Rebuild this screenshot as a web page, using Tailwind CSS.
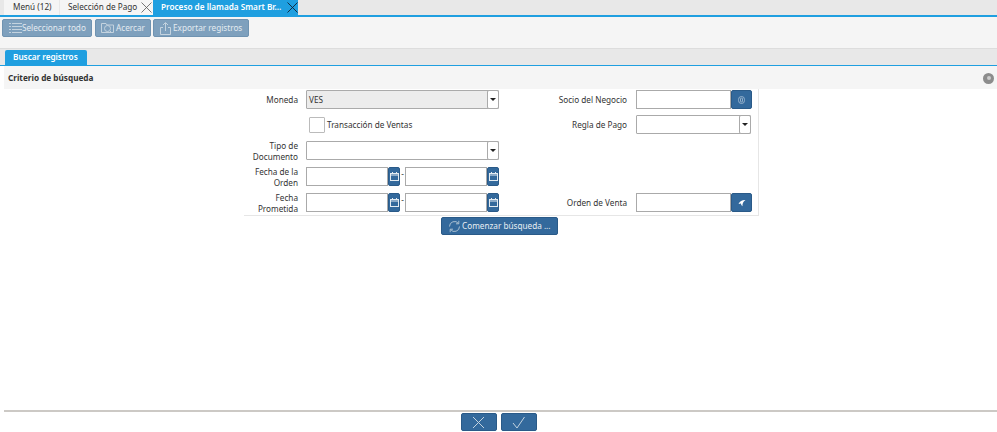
<!DOCTYPE html>
<html><head><meta charset="utf-8"><script src="https://cdn.jsdelivr.net/npm/@tailwindcss/browser@4"></script></head>
<body class="m-0 bg-white overflow-hidden">
<div class="w-[997px] h-[432px] flex flex-col font-['Noto_Sans','Open_Sans',sans-serif] text-[8.2px] text-[#333] bg-white whitespace-nowrap">
  <!-- top tabs -->
  <div class="h-[17px] shrink-0 flex items-end pl-[4px] bg-[#e8e8e8] border-b-[2px] border-[#1f9fe0]">
    <div class="h-[15px] w-[55px] bg-[#f5f5f5] flex items-center pl-[9px]">Menú (12)</div>
    <div class="ml-[1px] h-[15px] w-[93px] bg-[#f5f5f5] flex items-center pl-[8px] justify-between">Selección de Pago
      <svg class="w-[11px] h-[11px] mr-[1px]" viewBox="0 0 11 11" stroke="#555" stroke-width="0.8" fill="none"><path d="M0.5 0.5L10.5 10.5M10.5 0.5L0.5 10.5"/></svg></div>
    <div class="h-[15px] w-[145px] bg-[#1f9fe0] flex items-center pl-[8px] justify-between text-white font-semibold">Proceso de llamada Smart Br...
      <svg class="w-[11px] h-[11px] mr-[0px]" viewBox="0 0 11 11" stroke="#123" stroke-width="0.9" fill="none"><path d="M0.5 0.5L10.5 10.5M10.5 0.5L0.5 10.5"/></svg></div>
  </div>
  <!-- toolbar -->
  <div class="h-[32px] shrink-0 bg-[#f5f5f5] flex items-start pl-[2px] pt-[2px] text-[#e4ebf1] border-b border-[#ddd]">
    <div class="h-[18px] w-[90px] bg-[#7ea0bd] border border-[#6f93b1] rounded-[2px] flex items-center pl-[6px] gap-[1px]">
      <svg class="w-[13px] h-[12px]" viewBox="0 0 13 12" stroke="#c4d3df" fill="none"><path d="M0 1.5H2M3 1.5H13M0 4.5H2M3 4.5H13M0 7.5H2M3 7.5H13M0 10.5H2M3 10.5H13"/></svg><span class="-ml-[1px]">Seleccionar todo</span></div>
    <div class="ml-[3px] h-[18px] w-[56px] bg-[#7ea0bd] border border-[#6f93b1] rounded-[2px] flex items-center pl-[5px] gap-[2px]">
      <svg class="w-[13px] h-[12px]" viewBox="0 0 13 12" stroke="#c4d3df" fill="none"><path d="M0.5 10.5V1.5H5L6 3H12.5V10.5Z"/><circle cx="6.5" cy="6.5" r="3"/><path d="M9 9L11 11"/></svg>Acercar</div>
    <div class="ml-[2px] h-[18px] w-[96px] bg-[#7ea0bd] border border-[#6f93b1] rounded-[2px] flex items-center pl-[6px] gap-[2px]">
      <svg class="w-[11px] h-[13px]" viewBox="0 0 11 13" stroke="#c4d3df" fill="none"><path d="M3 5.5H0.5V12.5H10.5V5.5H8M5.5 9V1M3 3L5.5 0.5L8 3"/></svg>Exportar registros</div>
  </div>
  <!-- tab 2 -->
  <div class="h-[17px] shrink-0 flex items-end pl-[5px] bg-[#e8e8e8] border-b border-[#1f9fe0]">
    <div class="h-[15px] w-[82px] bg-[#1f9fe0] rounded-t-[2px] flex items-center pl-[8px] text-white font-semibold">Buscar registros</div>
  </div>
  <!-- body -->
  <div class="flex-1 flex flex-col pl-[4px]">
    <div class="h-[23px] shrink-0 bg-[#f5f5f5] flex items-center justify-between pl-[4px] pr-[3px] pt-[1px]">
      <span class="font-bold text-[#333]">Criterio de búsqueda</span>
      <span class="w-[11px] h-[11px] rounded-full bg-[#8c8c8c] flex items-center justify-center"><span class="w-[4px] h-[4px] rounded-full bg-[#ccc]"></span></span>
    </div>
    <!-- form -->
    <div class="ml-[240px] w-[515px] h-[127px] border-r border-b border-[#e6e6e6] grid grid-cols-[54px_8px_193px_1fr_9px_116px_6px] grid-rows-[25px_26px_26px_26px_26px] pt-[1px] items-start">
      <!-- row 1 -->
      <div class="text-right leading-[19px]">Moneda</div><div></div>
      <div class="h-[19px] border border-[#aaa] bg-[#ececec] flex justify-between items-stretch pl-[2px] rounded-[1px]"><span class="leading-[17px]">VES</span><span class="w-[12px] -mr-px -mt-px -mb-px bg-white border border-[#aaa] rounded-[2px] flex items-center justify-center"><span class="border-x-[3px] border-t-[3px] border-x-transparent border-t-[#222]"></span></span></div>
      <div class="col-start-4 text-right leading-[19px]">Socio del Negocio</div><div></div>
      <div class="h-[19px] flex"><span class="flex-1 border border-[#aaa] bg-white"></span><span class="w-[21px] bg-[#33699c] border border-[#2a5a88] rounded-[2px] flex items-center justify-center"><svg class="w-[7px] h-[8px]" viewBox="0 0 7 8" fill="none" stroke="#9fb8cf" stroke-width="0.9"><rect x="0.5" y="0.5" width="6" height="7" rx="3"/><rect x="2.5" y="2" width="2" height="4" rx="1"/></svg></span></div><div></div>
      <!-- row 2 -->
      <div></div><div></div>
      <label class="h-[19px] flex items-center pl-[3px] gap-[2px]"><span class="w-[16px] h-[16px] border border-[#bbb] bg-white rounded-[1px]"></span><span class="pt-[2px]">Transacción de Ventas</span></label>
      <div class="col-start-4 text-right leading-[19px]">Regla de Pago</div><div></div>
      <div class="h-[19px] w-[115px] border border-[#aaa] bg-white flex justify-end rounded-[1px]"><span class="w-[12px] -mr-px -mt-px -mb-px bg-white border border-[#aaa] rounded-[2px] flex items-center justify-center"><span class="border-x-[3px] border-t-[3px] border-x-transparent border-t-[#222]"></span></span></div><div></div>
      <!-- row 3 -->
      <div class="text-right leading-[11px] -mt-[1px] whitespace-normal">Tipo de Documento</div><div></div>
      <div class="h-[19px] border border-[#aaa] bg-white flex justify-end rounded-[1px]"><span class="w-[12px] -mr-px -mt-px -mb-px bg-white border border-[#aaa] rounded-[2px] flex items-center justify-center"><span class="border-x-[3px] border-t-[3px] border-x-transparent border-t-[#222]"></span></span></div>
      <div class="col-span-4"></div>
      <!-- row 4 -->
      <div class="text-right leading-[11px] -mt-[1px] whitespace-normal">Fecha de la Orden</div><div></div>
      <div class="h-[19px] flex">
        <span class="w-[82px] border border-[#aaa]"></span><span class="w-[12px] bg-[#33699c] border border-[#2a5a88] rounded-[2px] flex items-center justify-center"><svg class="w-[9px] h-[9px]" viewBox="0 0 9 9" fill="none" stroke="#e3ebf1"><rect x="0.5" y="1.5" width="8" height="7"/><path d="M0.5 3H8.5M2.5 0V1.5M6.5 0V1.5"/></svg></span>
        <span class="w-[5px] leading-[14px] text-center">-</span>
        <span class="w-[82px] border border-[#aaa]"></span><span class="w-[12px] bg-[#33699c] border border-[#2a5a88] rounded-[2px] flex items-center justify-center"><svg class="w-[9px] h-[9px]" viewBox="0 0 9 9" fill="none" stroke="#e3ebf1"><rect x="0.5" y="1.5" width="8" height="7"/><path d="M0.5 3H8.5M2.5 0V1.5M6.5 0V1.5"/></svg></span>
      </div>
      <div class="col-span-4"></div>
      <!-- row 5 -->
      <div class="text-right leading-[11px] -mt-[1px] whitespace-normal">Fecha Prometida</div><div></div>
      <div class="h-[19px] flex">
        <span class="w-[82px] border border-[#aaa]"></span><span class="w-[12px] bg-[#33699c] border border-[#2a5a88] rounded-[2px] flex items-center justify-center"><svg class="w-[9px] h-[9px]" viewBox="0 0 9 9" fill="none" stroke="#e3ebf1"><rect x="0.5" y="1.5" width="8" height="7"/><path d="M0.5 3H8.5M2.5 0V1.5M6.5 0V1.5"/></svg></span>
        <span class="w-[5px] leading-[14px] text-center">-</span>
        <span class="w-[82px] border border-[#aaa]"></span><span class="w-[12px] bg-[#33699c] border border-[#2a5a88] rounded-[2px] flex items-center justify-center"><svg class="w-[9px] h-[9px]" viewBox="0 0 9 9" fill="none" stroke="#e3ebf1"><rect x="0.5" y="1.5" width="8" height="7"/><path d="M0.5 3H8.5M2.5 0V1.5M6.5 0V1.5"/></svg></span>
      </div>
      <div class="col-start-4 text-right leading-[19px]">Orden de Venta</div><div></div>
      <div class="h-[19px] flex"><span class="flex-1 border border-[#aaa] bg-white"></span><span class="w-[21px] bg-[#33699c] border border-[#2a5a88] rounded-[2px] flex items-center justify-center"><svg class="w-[8px] h-[8px]" viewBox="0 0 8 8" fill="#fff"><path d="M7.5 1C4.5 0.8 1.8 1.8 0.5 5L3 4.6C3 5.6 3.4 6.6 4.5 7.2C4.2 5 5.2 2.6 7.5 1Z"/></svg></span></div><div></div>
    </div>
    <!-- search button -->
    <div class="flex justify-start pl-[437px] mt-[1px]">
      <div class="h-[18px] w-[117px] bg-[#33699c] border border-[#2a5a88] rounded-[2px] flex items-center pl-[6px] gap-[1px] text-[#e8eef3]">
        <svg class="w-[13px] h-[13px]" viewBox="0 0 13 13" fill="none" stroke="#a9bfd1"><path d="M1.5 6.5A5 5 0 0 1 10.5 3.5M11.5 6.5A5 5 0 0 1 2.5 9.5M10.8 0.8V3.8H8M2.2 12.2V9.2H5"/></svg>Comenzar búsqueda ...</div>
    </div>
    <div class="flex-1"></div>
    <!-- footer -->
    <div class="h-[22px] shrink-0 border-t-[2px] border-[#ccc9c5] flex justify-center gap-[4px] pt-[1px] pr-[4px]">
      <div class="h-[18px] w-[36px] bg-[#33699c] border border-[#2a5a88] rounded-[2px] flex items-center justify-center"><svg class="w-[13px] h-[13px]" viewBox="0 0 13 13" fill="none" stroke="#c3d3e0"><path d="M1 1L12 12M12 1L1 12"/></svg></div>
      <div class="h-[18px] w-[36px] bg-[#33699c] border border-[#2a5a88] rounded-[2px] flex items-center justify-center"><svg class="w-[13px] h-[13px]" viewBox="0 0 13 13" fill="none" stroke="#c3d3e0"><path d="M1 7L5 12L12.5 1"/></svg></div>
    </div>
  </div>
</div>
</body></html>
